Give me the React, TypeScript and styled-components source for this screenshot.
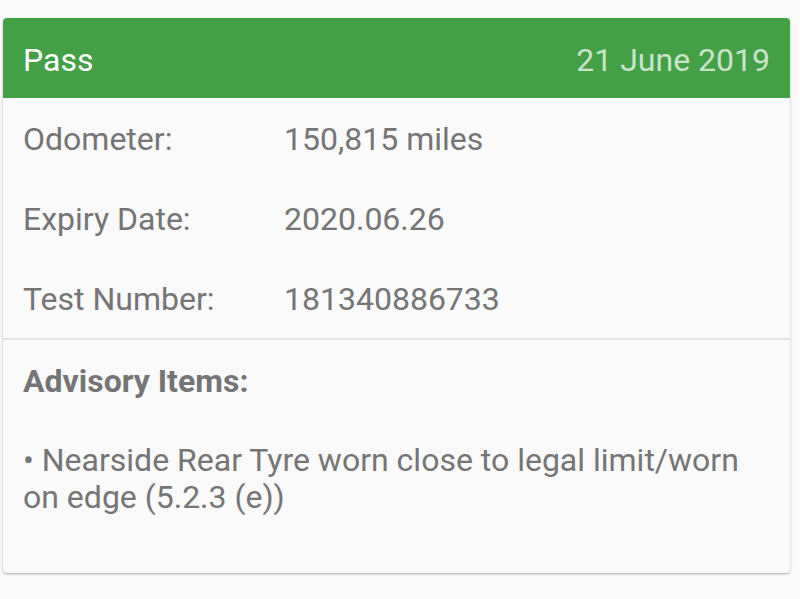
import React from 'react';
import styled, { createGlobalStyle } from 'styled-components';

const GlobalStyle = createGlobalStyle`
  html, body {
    margin: 0;
    padding: 0;
    background: #fafafa;
    font-family: Roboto, "Noto Sans", Arial, sans-serif;
  }
`;

const Page = styled.div`
  padding: 18px 10px 25px 3px;
`;

const Card = styled.div`
  background: #fafafa;
  border-radius: 4px;
  overflow: hidden;
  box-shadow: 0 1px 3px rgba(0, 0, 0, 0.22), 0 1px 1px rgba(0, 0, 0, 0.12);
`;

const Header = styled.div`
  display: flex;
  align-items: center;
  justify-content: space-between;
  box-sizing: border-box;
  height: 80px;
  padding: 3px 20px 0;
  background: #43a047;
  font-size: 32px;
`;

const Result = styled.span`
  color: #ffffff;
`;

const TestDate = styled.span`
  color: rgba(255, 255, 255, 0.72);
`;

const Details = styled.div`
  border-bottom: 2px solid #e2e2e2;
`;

const Row = styled.div`
  display: grid;
  grid-template-columns: 261px 1fr;
  align-items: center;
  box-sizing: border-box;
  height: 80px;
  padding: 2px 20px 0;
  font-size: 32px;
  color: #757575;
`;

const Advisory = styled.div`
  padding: 23px 20px 57px;
  font-size: 32px;
  line-height: 37px;
  color: #757575;
`;

const AdvisoryTitle = styled.div`
  font-weight: 700;
  margin-bottom: 42px;
`;

const AdvisoryItem = styled.div``;

const details = [
  { label: 'Odometer:', value: '150,815 miles' },
  { label: 'Expiry Date:', value: '2020.06.26' },
  { label: 'Test Number:', value: '181340886733' },
];

export default function App() {
  return (
    <>
      <GlobalStyle />
      <Page>
        <Card>
          <Header>
            <Result>Pass</Result>
            <TestDate>21 June 2019</TestDate>
          </Header>
          <Details>
            {details.map((d) => (
              <Row key={d.label}>
                <span>{d.label}</span>
                <span>{d.value}</span>
              </Row>
            ))}
          </Details>
          <Advisory>
            <AdvisoryTitle>Advisory Items:</AdvisoryTitle>
            <AdvisoryItem>• Nearside Rear Tyre worn close to legal limit/worn on edge (5.2.3 (e))</AdvisoryItem>
          </Advisory>
        </Card>
      </Page>
    </>
  );
}
